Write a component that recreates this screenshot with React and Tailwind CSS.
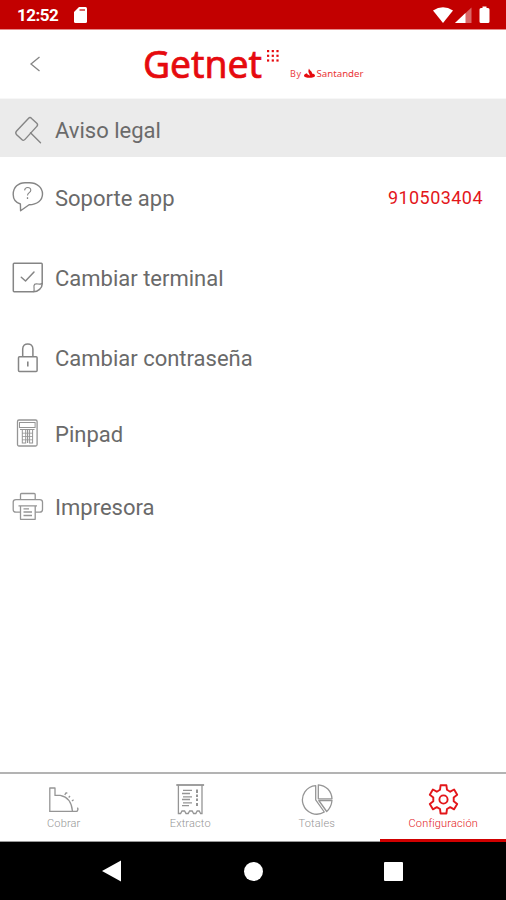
import React, { useState } from 'react';

const LegalIcon = () => (
    <svg width="32" height="32" viewBox="0 0 32 32" fill="none" stroke="#858585" strokeWidth="1.4" strokeLinejoin="round" strokeLinecap="round">
        <path d="M4.600 17 16.400 4.400Q18 2.800 19.600 4.400L24.800 9.200Q26.400 10.800 24.800 12.400L13 25.400Q11.400 27.200 9.800 25.600L4.400 20.400Q3 19 4.600 17Z" />
        <path d="m18.500 18.800 10 10" />
    </svg>
);

const SupportIcon = () => (
    <svg width="32" height="32" viewBox="0 0 32 32" fill="none" stroke="#858585" strokeWidth="1.4" strokeLinejoin="round">
        <path d="M8.400 22C4.200 20.600 1.200 17 1.200 12.400 1.200 5.200 6.400 .7 13 .7h4.500c7.500 0 13 5 13 11.300 0 6.400-5.400 10.600-13.400 10.800L8.600 28.800Z" />
        <path d="M12.600 8.400c.2-3.800 6.200-3.800 6.200-.2 0 2.600-3.300 2.400-3.300 5.300" strokeWidth="1.1" />
        <path d="M15.500 15.200v1.800" strokeWidth="1.3" />
    </svg>
);

const TerminalIcon = () => (
    <svg width="32" height="32" viewBox="0 0 32 32" fill="none" stroke="#858585" strokeWidth="1.5" strokeLinejoin="round" strokeLinecap="round">
        <path d="M30.200 22V2.200Q30.200 1.300 29.300 1.300H2.200Q1.300 1.300 1.300 2.200V28.800Q1.300 29.800 2.200 29.800H21.500C26 29.800 30.200 26 30.200 22Z" />
        <path d="M21.500 29.500C23.500 28 20.500 24 22.700 22.200c2-1.500 5.500 1.300 7.300-.7" strokeWidth="1.2" />
        <path d="m9.300 15.300 4.200 3.700 8.500-9" />
    </svg>
);

const PasswordIcon = () => (
    <svg width="32" height="32" viewBox="0 0 32 32" fill="none" stroke="#858585" strokeWidth="1.5" strokeLinejoin="round">
        <rect x="6.5" y="14.7" width="18.6" height="14.8" rx="1" />
        <path d="M10.700 14.700V7C10.700 .2 20.900 .2 20.900 7v7.700" />
        <path d="M15.800 19.500v5" strokeWidth="1.6" />
    </svg>
);

const PinpadIcon = () => (
    <svg width="32" height="32" viewBox="0 0 32 32" fill="none" stroke="#959595" strokeWidth="1.3">
        <rect x="5.5" y="2" width="19.6" height="26" rx="1.5" />
        <rect x="7.5" y="4.5" width="15.6" height="5" strokeWidth="1" />
        <path d="M8 11.500h14.500" strokeWidth="1" />
        <rect x="10.3" y="11.5" width="3.4" height="13.5" strokeWidth="1" />
        <rect x="17.600" y="11.5" width="3" height="13.5" strokeWidth="1" />
        <path d="M15.600 11.500V25" strokeWidth="1.2" />
        <path d="M10 15.200h10.800M10 18.500h10.800M10 21.800h10.800" strokeWidth=".8" />
    </svg>
);

const PrinterIcon = () => (
    <svg width="32" height="32" viewBox="0 0 32 32" fill="none" stroke="#959595" strokeWidth="1.3" strokeLinejoin="round">
        <path d="M8.500 8.700V3.500q0-1 1-1h12.700q1 0 1 1v5.200" />
        <path d="M8.500 21.200H4Q1.200 21.200 1.200 18.500V11Q1.200 8.700 4 8.700h23.700q2.800 0 2.800 2.300v7.500q0 2.700-2.800 2.700h-4.500" />
        <path d="M6.500 14.800h18.500M8.500 14.800v13.500h14.700V14.800" />
        <path d="M11.500 17.800h5.500M11.500 21h8.500M11.500 24.500h8.500" />
    </svg>
);

const ChargeIcon = () => (
    <svg width="32" height="32" viewBox="0 0 32 32" fill="none" stroke="currentColor" strokeWidth="1.3" strokeLinejoin="round">
        <path d="M1.800 28.400V5h5.200v7.400h5.200c7.200 1.400 11.500 6.600 12.200 15.600" />
        <path d="M1.200 28.400h27.800q1.700-2.200.4-3.800M16.800 12l1-2h1.500M20.700 14.500l1.300-1.500M23.900 18l1.700-1.200" />
    </svg>
);

const ReceiptIcon = () => (
    <svg width="32" height="32" viewBox="0 0 32 32" fill="none" stroke="currentColor" strokeWidth="1.3">
        <path d="M2.300 2h27.800" strokeWidth="1.8" />
        <path d="M4.400 2v28.500h2.200l1.400-2.500h2.600l1.400 2.500h2.200l1.400-2.500h2.600l1.400 2.500h2.200l1.400-2.500h2l1.400 2.500h1.400V2" />
        <path d="M9 7.300h9M8 10.500h8M9 13.800h9M8 16.500h8M9 19.800h9M8 22.700h7" />
        <path d="M23 6.500v3.500M23 11.500v2.500M23 15.500v2.500M23 20v3" strokeWidth="2" />
    </svg>
);

const TotalsIcon = () => (
    <svg width="32" height="32" viewBox="0 0 32 32" fill="none" stroke="currentColor" strokeWidth="1.3" strokeLinejoin="round">
        <path d="M14.700 2.600A14.300 14.300 0 1 0 23.300 29L14.700 16.800Z" />
        <path d="M17.300 1.800V15.800H31C30.500 8 25 2.300 17.300 1.800Z" />
        <path d="M17.800 17.500H31C30.500 22.500 28.500 26 25.700 28.500Z" />
    </svg>
);

const SettingsIcon = () => (
    <svg width="32" height="32" viewBox="0 0 32 32" fill="none" stroke="currentColor" strokeWidth="1.9" strokeLinejoin="round">
        <path d="M13.600 2.300h5.800l.6 4.500 3.200 1.900 3.900-2.200 3.100 5.200-3.500 2.800v3.800l3.500 2.800-3.100 5.200-3.900-2.200-3.200 1.900-.6 4.500h-5.800l-.6-4.500-3.200-1.900-3.900 2.200-3.100-5.200 3.500-2.800v-3.800l-3.500-2.800 3.100-5.200 3.900 2.200 3.200-1.900Z" />
        <circle cx="16.5" cy="16.5" r="4.1" />
    </svg>
);

const options = [
    { label: 'Aviso legal', icon: LegalIcon, row: 'h-[58px] bg-[#ebebeb] pt-[3px]' },
    { label: 'Soporte app', icon: SupportIcon, row: 'h-[81px]', detail: '910503404' },
    { label: 'Cambiar terminal', icon: TerminalIcon, row: 'h-20' },
    { label: 'Cambiar contraseña', icon: PasswordIcon, row: 'h-20' },
    { label: 'Pinpad', icon: PinpadIcon, row: 'h-[72px]' },
    { label: 'Impresora', icon: PrinterIcon, row: 'h-[73px]' },
];

const tabs = [
    { label: 'Cobrar', icon: ChargeIcon },
    { label: 'Extracto', icon: ReceiptIcon },
    { label: 'Totales', icon: TotalsIcon },
    { label: 'Configuración', icon: SettingsIcon },
];

const StatusBar = () => (
    <div className="h-[30px] bg-[#c20000] border-b border-[#e58a8a] flex items-center px-[17px] text-white shrink-0">
        <span className="text-[17px] leading-none font-bold w-[41px] whitespace-nowrap tracking-[-0.5px] pt-0.5">12:52</span>
        <svg className="ml-4" width="13" height="16" viewBox="0 0 13 16">
            <path d="M5 0h6.500Q13 0 13 1.500v13Q13 16 11.500 16h-10Q0 16 0 14.500V5Z" fill="#fff" />
            <path d="M5.500 3h5.500" stroke="#c20000" strokeWidth="1.6" opacity=".75" />
        </svg>
        <svg className="ml-auto -mr-[2px]" width="58" height="18" viewBox="0 0 58 18" fill="#fff">
            <path d="M0 4.500Q10 -2 20 4.500L10 17Z" />
            <path d="M38.500 1.500v15.500H22Z" opacity=".4" />
            <path d="M32.500 7v10H22Z" />
            <path d="M49.500 .500h4v1.500h1.500q1.500 0 1.500 1.500v12q0 1.500-1.500 1.500h-7q-1.500 0-1.500-1.500V3.500q0-1.500 1.500-1.500h1.500Z" />
        </svg>
    </div>
);

const Logo = () => (
    <svg width="230" height="60" viewBox="0 -10 230 60" fill="#e60a0e">
        <text x="1" y="33.5" fontSize="37.5" textLength="119" lengthAdjust="spacingAndGlyphs" fontFamily="'Noto Sans', 'Open Sans', sans-serif" stroke="#e60a0e" strokeWidth=".7">Getnet</text>
        {[125, 129.7, 134.4].map((x) =>
            [6, 10.7, 15.4].map((y) => <rect key={`${x}-${y}`} x={x} y={y} width="2.2" height="2.2" />)
        )}
        <text x="148" y="33" fontSize="9" textLength="11" fontFamily="'Noto Sans', sans-serif" opacity=".8">By</text>
        <path d="M167 24.500c.5 2 3.500 3 3 5 2 .3 3 1 3 2.200 0 2.800-11 2.800-11 0 0-1.200 1-2 3-2.500 0 1.500 2.500 1.500 2.500 2.800 1-2-2.500-3.300-.5-7.500Z" />
        <text x="174.500" y="33" fontSize="9.5" textLength="47" lengthAdjust="spacingAndGlyphs" fontFamily="'Noto Sans', sans-serif" opacity=".85">Santander</text>
    </svg>
);

const App = () => {
    const [activeTab, setActiveTab] = useState('Configuración');

    return (
        <div className="w-[506px] h-[900px] bg-white flex flex-col overflow-hidden font-[Roboto,sans-serif]">
            <StatusBar />

            {/* Header */}
            <header className="h-[69px] flex items-center shrink-0 border-b border-[#f7f7f7]">
                <button className="ml-[29px]" aria-label="Volver">
                    <svg width="12" height="16" viewBox="0 0 12 16" fill="none" stroke="#858585" strokeWidth="1.3">
                        <path d="M10.500 1 2 8l8.500 7" />
                    </svg>
                </button>
                <div className="ml-[101px]">
                    <Logo />
                </div>
            </header>

            {/* Options */}
            <main className="flex-1">
                {options.map(({ label, icon: Icon, row, detail }) => (
                    <div key={label} className={`flex items-center pl-3 pr-[23px] ${row}`}>
                        <Icon />
                        <span className="ml-[11px] text-[22px] leading-none text-[#6a6a6a] pt-0.5">{label}</span>
                        {detail && <span className="ml-auto text-[18px] leading-none text-[#e3161a] tracking-[0.45px]">{detail}</span>}
                    </div>
                ))}
            </main>

            {/* Bottom tabs */}
            <nav className="h-[70px] border-t-2 border-[#b3b3b3] grid grid-cols-4 shrink-0">
                {tabs.map(({ label, icon: Icon }) => {
                    const active = label === activeTab;
                    return (
                        <button
                            key={label}
                            onClick={() => setActiveTab(label)}
                            className={`flex flex-col items-center pl-px pt-[9px] ${active ? 'border-b-[3px] border-[#d00000] text-[#e3161a]' : 'border-b border-[#999] text-[#959595]'}`}
                        >
                            <Icon />
                            <span className="mt-[3px] text-[11px] leading-[12px] font-light tracking-[0.15px]">{label}</span>
                        </button>
                    );
                })}
            </nav>

            {/* System navigation */}
            <div className="h-[58px] bg-black flex items-center justify-between pl-[102px] pr-[103px] shrink-0">
                <svg width="20" height="22" viewBox="0 0 20 22" fill="#fff"><path d="M0 11 19 .5v21Z" /></svg>
                <div className="w-[19px] h-[19px] rounded-full bg-white" />
                <div className="w-[19px] h-[19px] rounded-[1px] bg-white" />
            </div>
        </div>
    );
};

export default App;
